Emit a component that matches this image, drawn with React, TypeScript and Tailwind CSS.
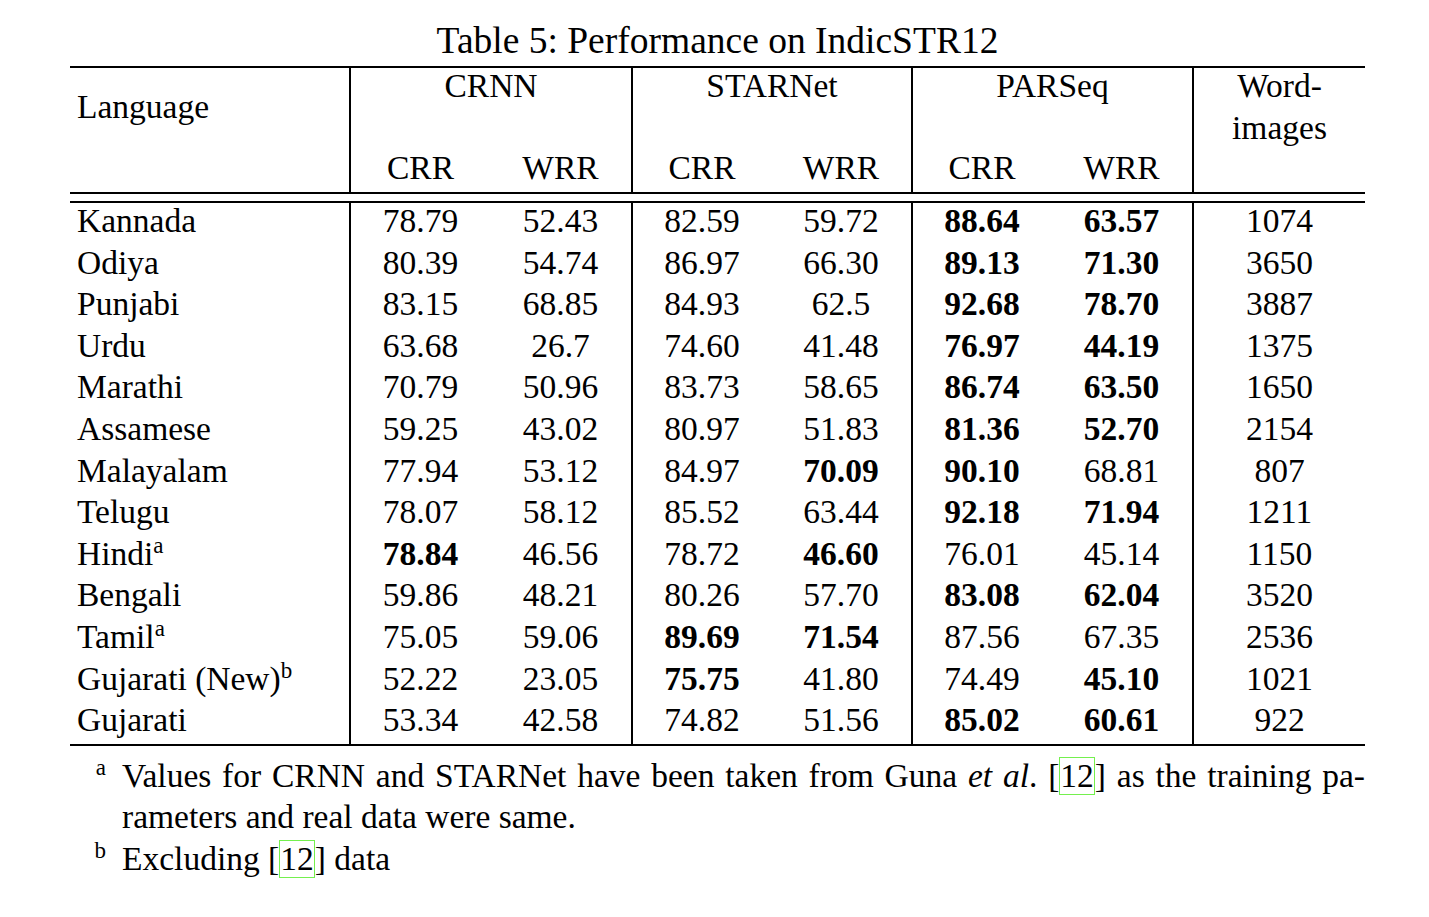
const rows: { lang: string; mark?: string; cells: string[] }[] = [
  { lang: "Kannada", cells: ["78.79", "52.43", "82.59", "59.72", "*88.64", "*63.57", "1074"] },
  { lang: "Odiya", cells: ["80.39", "54.74", "86.97", "66.30", "*89.13", "*71.30", "3650"] },
  { lang: "Punjabi", cells: ["83.15", "68.85", "84.93", "62.5", "*92.68", "*78.70", "3887"] },
  { lang: "Urdu", cells: ["63.68", "26.7", "74.60", "41.48", "*76.97", "*44.19", "1375"] },
  { lang: "Marathi", cells: ["70.79", "50.96", "83.73", "58.65", "*86.74", "*63.50", "1650"] },
  { lang: "Assamese", cells: ["59.25", "43.02", "80.97", "51.83", "*81.36", "*52.70", "2154"] },
  { lang: "Malayalam", cells: ["77.94", "53.12", "84.97", "*70.09", "*90.10", "68.81", "807"] },
  { lang: "Telugu", cells: ["78.07", "58.12", "85.52", "63.44", "*92.18", "*71.94", "1211"] },
  { lang: "Hindi", mark: "a", cells: ["*78.84", "46.56", "78.72", "*46.60", "76.01", "45.14", "1150"] },
  { lang: "Bengali", cells: ["59.86", "48.21", "80.26", "57.70", "*83.08", "*62.04", "3520"] },
  { lang: "Tamil", mark: "a", cells: ["75.05", "59.06", "*89.69", "*71.54", "87.56", "67.35", "2536"] },
  { lang: "Gujarati (New)", mark: "b", cells: ["52.22", "23.05", "*75.75", "41.80", "74.49", "*45.10", "1021"] },
  { lang: "Gujarati", cells: ["53.34", "42.58", "74.82", "51.56", "*85.02", "*60.61", "922"] },
];

const cols = "grid grid-cols-[279px_141px_141px_140px_140px_140px_141px_173px]";

function Cite({ n }: { n: string }) {
  return (
    <>
      [<span className="inline-block border-[1.5px] border-[#74f04e] leading-[36px]">{n}</span>]
    </>
  );
}

function Sup({ children }: { children: string }) {
  return <sup className="text-[23px]">{children}</sup>;
}

export default function App() {
  return (
    <div className="h-[917px] w-[1429px] bg-white text-black font-['Liberation_Serif','Times_New_Roman',serif]">
      <div className="ml-[70px] w-[1295px] pt-[21px]">
        <div className="h-[40px] text-center text-[37.5px] leading-[40px]">Table 5: Performance on IndicSTR12</div>

        <div className="mt-[5px] h-[2px] bg-black" />

        {/* header */}
        <div className={`${cols} grid-rows-[82px_42px] text-[33.5px] leading-[35px]`}>
          <div className="row-span-2 pl-[7px] pt-[21px]">Language</div>
          <div className="col-span-2 border-l-2 border-black text-center">CRNN</div>
          <div className="col-span-2 border-l-2 border-black text-center">STARNet</div>
          <div className="col-span-2 border-l-2 border-black text-center">PARSeq</div>
          <div className="row-span-2 border-l-2 border-black text-center">
            <div className="h-[42px]">Word-</div>
            <div>images</div>
          </div>
          <div className="border-l-2 border-black text-center">CRR</div>
          <div className="text-center">WRR</div>
          <div className="border-l-2 border-black text-center">CRR</div>
          <div className="text-center">WRR</div>
          <div className="border-l-2 border-black text-center">CRR</div>
          <div className="text-center">WRR</div>
        </div>

        <div className="h-[2px] bg-black" />
        <div className="h-[7px]" />
        <div className="h-[2px] bg-black" />

        {/* body */}
        <div className={`${cols} auto-rows-[41.6px] text-[33.5px] leading-[35px]`}>
          {rows.map((r) => (
            <div key={r.lang} className="contents">
              <div className="pl-[7px] whitespace-nowrap">
                {r.lang}
                {r.mark && <Sup>{r.mark}</Sup>}
              </div>
              {r.cells.map((c, i) => {
                const bold = c.startsWith("*");
                const edge = i % 2 === 0;
                return (
                  <div
                    key={i}
                    className={`text-center ${edge ? "border-l-2 border-black" : ""} ${bold ? "font-bold" : ""}`}
                  >
                    {bold ? c.slice(1) : c}
                  </div>
                );
              })}
            </div>
          ))}
        </div>

        <div className="h-[2px] bg-black" />

        {/* footnotes */}
        <div className="mt-[9px] grid grid-cols-[52px_1fr] text-[33.5px] leading-[41.6px]">
          <div className="pr-[16px] text-right">
            <Sup>a</Sup>
          </div>
          <div>
            <div className="text-justify [text-align-last:justify]">
              Values for CRNN and STARNet have been taken from Guna <i>et al</i>. <Cite n="12" /> as the training pa-
            </div>
            <div>rameters and real data were same.</div>
          </div>
          <div className="pr-[16px] text-right">
            <Sup>b</Sup>
          </div>
          <div>
            Excluding <Cite n="12" /> data
          </div>
        </div>
      </div>
    </div>
  );
}
